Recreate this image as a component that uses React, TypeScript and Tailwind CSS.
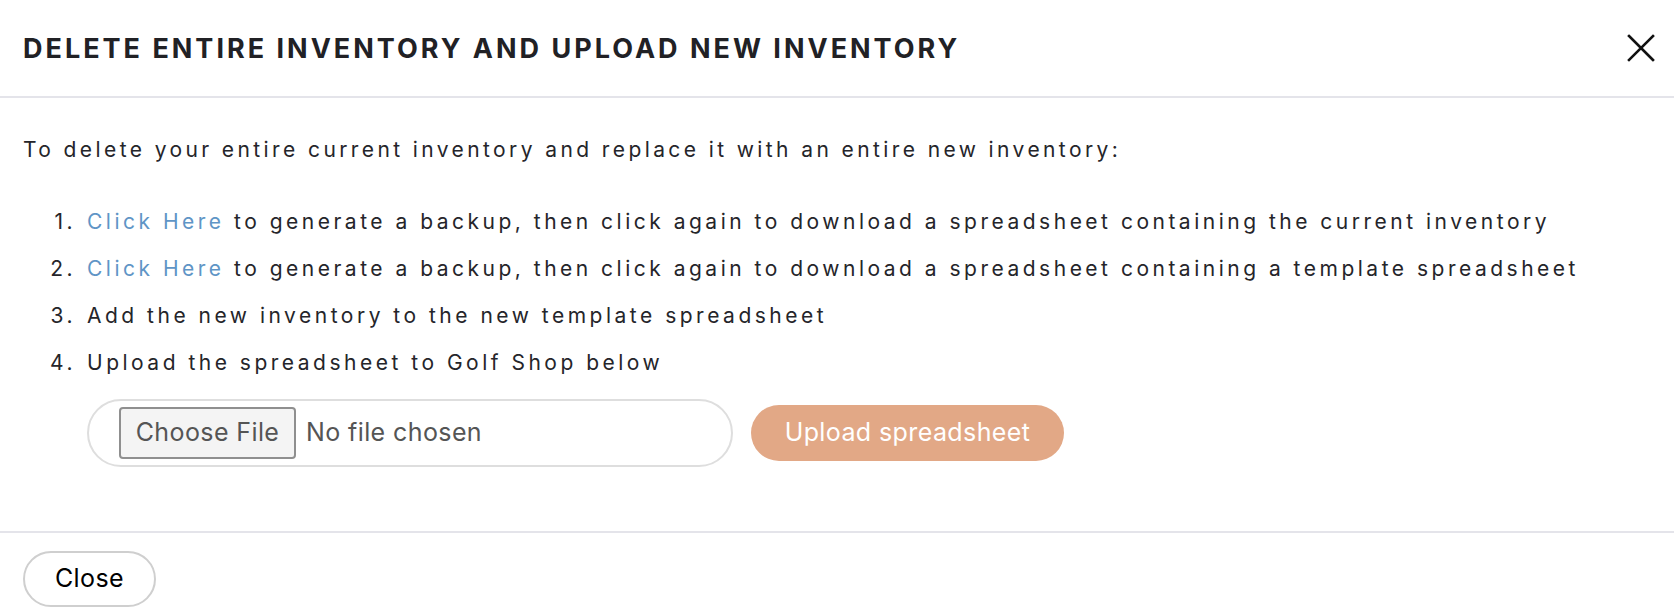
import React from "react";

function Item({ n, children }: { n: string; children: React.ReactNode }) {
  return (
    <li className="flex">
      <span className="w-[53px] text-right shrink-0">{n}</span>
      <span className="ml-[11px]">{children}</span>
    </li>
  );
}

export default function App() {
  const font = { fontFamily: "Inter, 'Noto Sans', sans-serif" };
  return (
    <div className="w-[1674px] h-[616px] bg-white text-[#25252a] overflow-hidden" style={font}>
      <div className="h-[96px] flex items-center justify-between pl-[23px] pr-[19px]">
        <h1 className="text-[27px] font-bold tracking-[3px] text-[#212125] leading-none">
          DELETE ENTIRE INVENTORY AND UPLOAD NEW INVENTORY
        </h1>
        <button className="w-[28px] h-[28px] flex items-center justify-center">
          <svg width="28" height="28" viewBox="0 0 28 28" fill="none" stroke="#111" strokeWidth="2.6" strokeLinecap="square">
            <path d="M2 2 L26 26 M26 2 L2 26" />
          </svg>
        </button>
      </div>
      <div className="h-[2px] bg-[#e4e4ea]" />
      <div className="pl-[23px] pt-[37px] pb-[64px]">
        <p className="text-[21px] leading-[30px] tracking-[3.4px]">
          To delete your entire current inventory and replace it with an entire new inventory:
        </p>
        <ol className="mt-[33px] text-[21px] leading-[47px] tracking-[3.5px]">
          <Item n="1.">
            <a className="text-[#5f95c6]">Click Here</a> to generate a backup, then click again to download a spreadsheet containing the current inventory
          </Item>
          <Item n="2.">
            <a className="text-[#5f95c6]">Click Here</a> to generate a backup, then click again to download a spreadsheet containing a template spreadsheet
          </Item>
          <Item n="3.">Add the new inventory to the new template spreadsheet</Item>
          <Item n="4.">Upload the spreadsheet to Golf Shop below</Item>
        </ol>
        <div className="mt-[13px] ml-[64px] flex items-center gap-[18px]">
          <div className="w-[646px] h-[68px] rounded-full border-2 border-[#dedede] flex items-center pl-[30px]">
            <span className="h-[52px] w-[177px] flex items-center justify-center bg-[#f4f4f4] border-2 border-[#8f8f8f] rounded-[4px] text-[25px] tracking-[0.4px] text-[#555]">
              Choose File
            </span>
            <span className="ml-[10px] text-[25px] tracking-[0.4px] text-[#555]">No file chosen</span>
          </div>
          <button className="w-[313px] h-[56px] rounded-full bg-[#e2a886] text-white text-[25px] tracking-[0.4px]">
            Upload spreadsheet
          </button>
        </div>
      </div>
      <div className="h-[2px] bg-[#e4e4ea]" />
      <div className="pl-[23px] pt-[18px]">
        <button className="w-[133px] h-[56px] rounded-full border-2 border-[#cfcfcf] text-[25px] tracking-[0.4px] text-black">
          Close
        </button>
      </div>
    </div>
  );
}
